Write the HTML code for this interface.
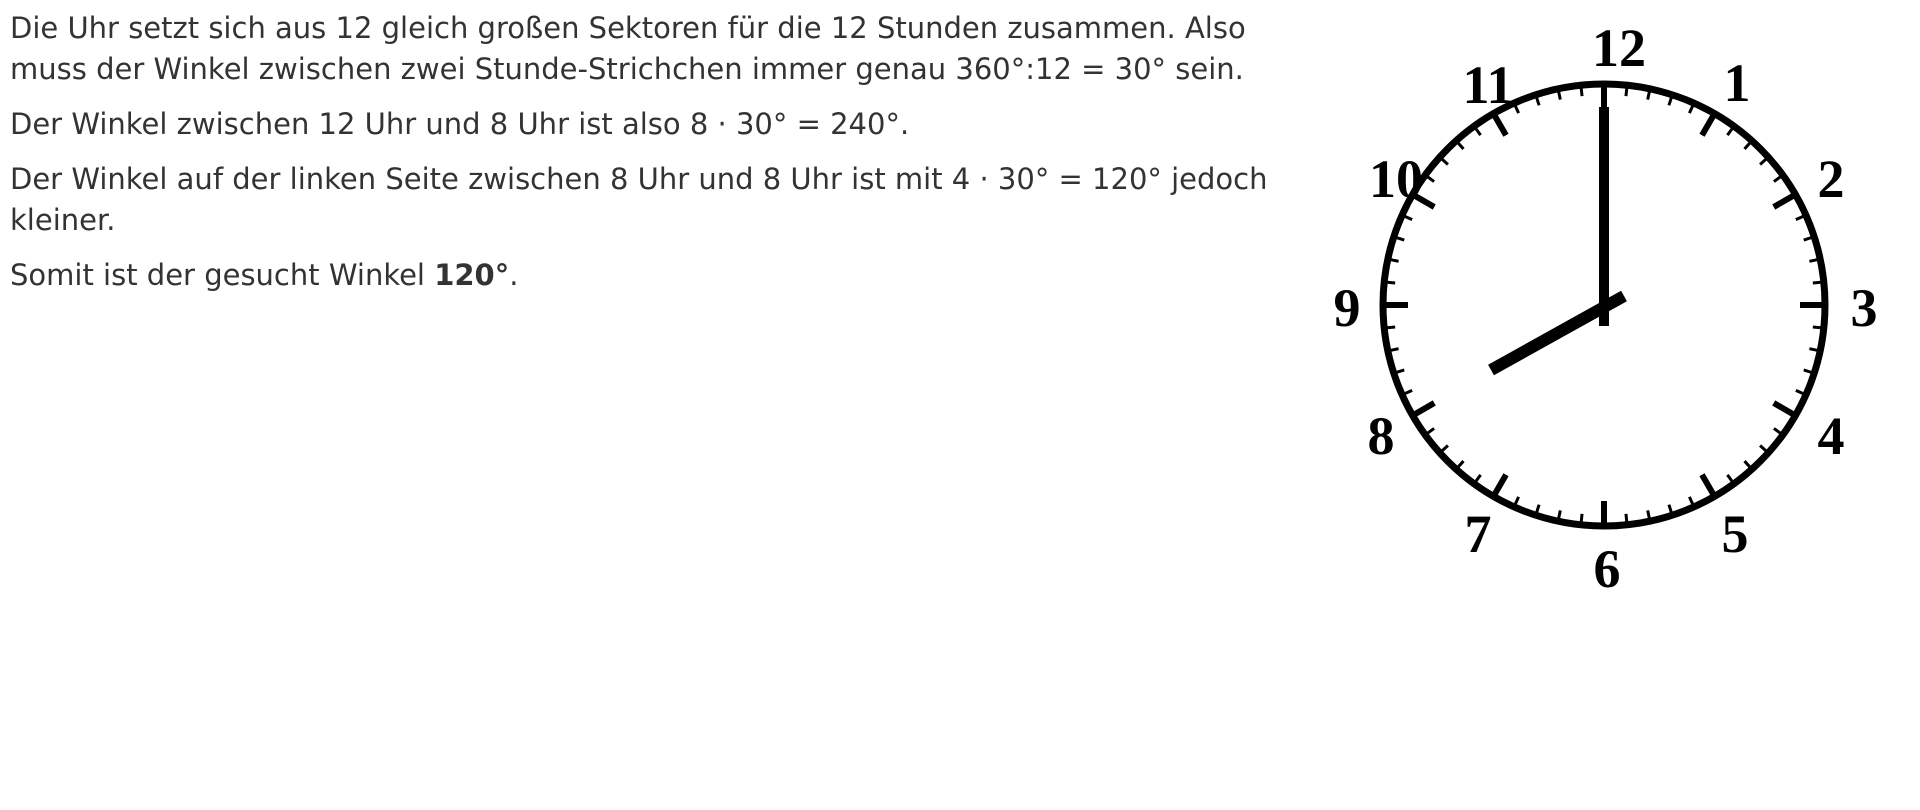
<!DOCTYPE html>
<html><head><meta charset="utf-8">
<style>
html,body{margin:0;padding:0;background:#fff;width:1920px;height:810px;overflow:hidden}
.txt{position:absolute;left:10px;top:8px;font-family:"DejaVu Sans","Liberation Sans",sans-serif;font-size:29px;color:#333;line-height:41px;white-space:nowrap}
.txt p{margin:0 0 14px 0}
svg{position:absolute;left:0;top:0}
</style></head><body>
<div class="txt">
<p>Die Uhr setzt sich aus 12 gleich großen Sektoren für die 12 Stunden zusammen. Also<br>muss der Winkel zwischen zwei Stunde-Strichchen immer genau 360°:12 = 30° sein.</p>
<p>Der Winkel zwischen 12 Uhr und 8 Uhr ist also 8 · 30° = 240°.</p>
<p>Der Winkel auf der linken Seite zwischen 8 Uhr und 8 Uhr ist mit 4 · 30° = 120° jedoch<br>kleiner.</p>
<p>Somit ist der gesucht Winkel <b>120°</b>.</p>
</div>
<svg width="1920" height="810" viewBox="0 0 1920 810">
<circle cx="1604" cy="305" r="221" fill="none" stroke="#000" stroke-width="7"/>
<g id="ticks" stroke="#000"></g>
<line x1="1604" y1="107" x2="1604" y2="326" stroke="#000" stroke-width="10"/>
<line x1="1491" y1="370" x2="1624" y2="296" stroke="#000" stroke-width="12"/>
<g font-family="'Liberation Serif',serif" font-weight="bold" font-size="54" text-anchor="middle" fill="#000">
<text x="1619" y="66">12</text>
<text x="1737" y="101">1</text>
<text x="1831" y="197">2</text>
<text x="1864" y="326">3</text>
<text x="1831" y="454">4</text>
<text x="1735" y="552">5</text>
<text x="1607" y="587">6</text>
<text x="1478" y="552">7</text>
<text x="1381" y="454">8</text>
<text x="1347" y="326">9</text>
<text x="1396" y="197">10</text>
<text x="1488" y="103">11</text>
</g>
</svg>
<script>
var g=document.getElementById('ticks'),ns='http://www.w3.org/2000/svg';
for(var i=0;i<60;i++){var a=i*6*Math.PI/180,maj=i%5==0,r1=218,r2=maj?196:210;
var l=document.createElementNS(ns,'line');
l.setAttribute('x1',1604+r1*Math.sin(a));l.setAttribute('y1',305-r1*Math.cos(a));
l.setAttribute('x2',1604+r2*Math.sin(a));l.setAttribute('y2',305-r2*Math.cos(a));
l.setAttribute('stroke-width',maj?6:3);g.appendChild(l);}
</script>
</body></html>
